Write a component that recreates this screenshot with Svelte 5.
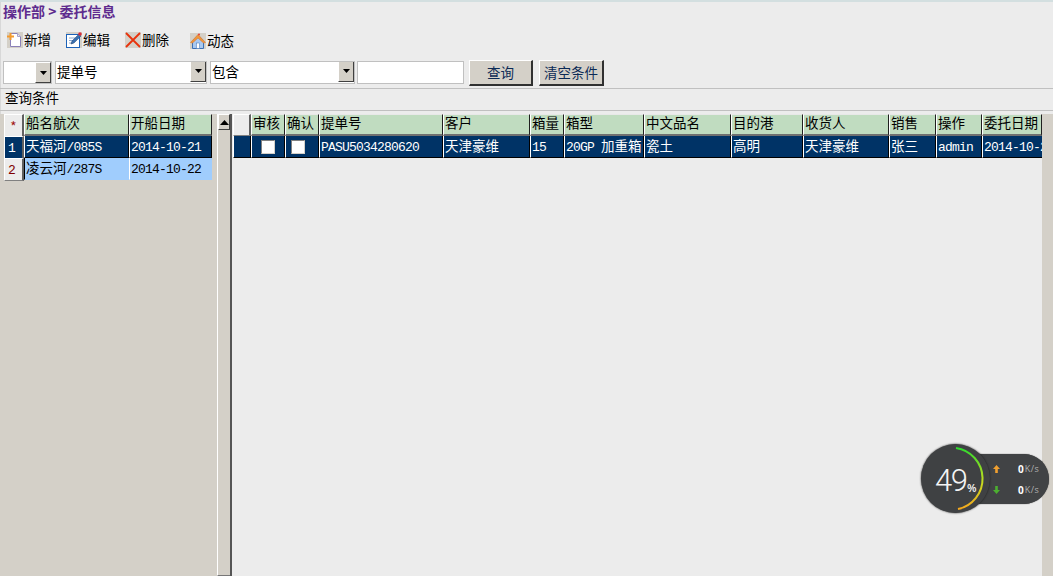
<script>
  const leftRows = [
    { no: "1", name: "天福河/085S", date: "2014-10-21", on: true },
    { no: "2", name: "凌云河/287S", date: "2014-10-22", on: false },
  ];
  const mainHeads = ["提单号", "客户", "箱量", "箱型", "中文品名", "目的港", "收货人", "销售", "操作", "委托日期"];
  const mainRow = ["PASU5034280620", "天津豪维", "15", "20GP 加重箱", "瓷土", "高明", "天津豪维", "张三", "admin", "2014-10-21"];

  // latin runs get their own size and tracking so they keep the 7px cell of the original font
  function runs(text) {
    return text.match(/[\x20-\x7e]+|[^\x20-\x7e]+/g).map((t) => ({ t, latin: /^[\x20-\x7e]/.test(t) }));
  }
</script>

{#snippet txt(text)}
  {#each runs(text) as r}
    {#if r.latin}<span class="latin">{r.t}</span>{:else}{r.t}{/if}
  {/each}
{/snippet}

{#snippet arrow()}
  <span class="drop"><svg width="7" height="4" viewBox="0 0 7 4"><path d="M0 0h7L3.500 4z" fill="#000" /></svg></span>
{/snippet}

<div class="page">
  <div class="title">操作部 &gt; 委托信息</div>

  <div class="toolbar">
    <div class="tool t-new">
      <svg width="16" height="16" viewBox="0 0 16 16">
        <rect width="16" height="16" fill="#d4d0c8" />
        <path d="M3.500 1.500h7l3 3v10h-10z" fill="#fff" stroke="#8a80b8" />
        <path d="M10.500 1.500v3h3" fill="#e8e8f4" stroke="#a8a4c8" />
        <path d="M3.500 1v7M0 4.500h7" stroke="#f29a2e" stroke-width="2" />
      </svg>
      <span>新增</span>
    </div>
    <div class="tool t-edit">
      <svg width="16" height="16" viewBox="0 0 16 16">
        <rect width="16" height="16" fill="#d4d0c8" />
        <rect x="0.500" y="2.500" width="13" height="13" fill="#fff" stroke="#1c62b8" />
        <path d="M3 6h6M3 8.500h5M3 11h4" stroke="#8aa8d0" />
        <path d="M5 12l1-3 7-7 2 2-7 7z" fill="#3a70b0" stroke="#20406c" stroke-width="0.500" />
        <circle cx="14" cy="2" r="1.800" fill="#d8303a" />
      </svg>
      <span>编辑</span>
    </div>
    <div class="tool t-del">
      <svg width="16" height="16" viewBox="0 0 16 16">
        <rect width="16" height="16" fill="#d4d0c8" />
        <path d="M1 1l14 14M15 1L1 15" stroke="#e8320c" stroke-width="1.800" />
      </svg>
      <span>删除</span>
    </div>
    <div class="tool t-home">
      <svg width="16" height="16" viewBox="0 0 16 16">
        <rect width="16" height="16" fill="#d4d0c8" />
        <path d="M2.500 8v7.500h11V8L8 3z" fill="#a8c8f0" stroke="#3c70b4" />
        <path d="M.500 9.500L8 1.500l7.500 8-2 .5L8 5 2.500 10z" fill="#f0963c" stroke="#d07028" stroke-width="0.500" />
        <rect x="6.500" y="10" width="3" height="5.500" fill="#fff" stroke="#3c70b4" stroke-width="0.500" />
        <circle cx="9" cy="1.500" r="1" fill="#e84030" />
      </svg>
      <span>动态</span>
    </div>
  </div>

  <div class="filters">
    <div class="select s-field">{@render arrow()}</div>
    <div class="select s-col"><span>提单号</span>{@render arrow()}</div>
    <div class="select s-op"><span>包含</span>{@render arrow()}</div>
    <div class="select s-val"></div>
    <div class="btn b-query">查询</div>
    <div class="btn b-clear">清空条件</div>
  </div>

  <div class="cond">查询条件</div>

  <div class="body">
    <div class="left">
      <div class="left-grid">
        <div class="lrow">
          <div class="corner">*</div>
          <div class="head">船名航次</div>
          <div class="head">开船日期</div>
        </div>
        {#each leftRows as r}
          <div class="lrow" class:on={r.on} class:off={!r.on}>
            <div class="rowno"><span class="latin">{r.no}</span></div>
            <div class="cell">{@render txt(r.name)}</div>
            <div class="cell">{@render txt(r.date)}</div>
          </div>
        {/each}
      </div>
      <div class="vscroll">
        <div class="up"><svg width="9" height="5" viewBox="0 0 9 5"><path d="M0 5h9L4.500 0z" fill="#000" /></svg></div>
      </div>
    </div>

    <div class="main">
      <div class="main-grid">
        <div class="mrow">
          <div class="blank"></div>
          <div class="head">审核</div>
          <div class="head">确认</div>
          {#each mainHeads as h}
            <div class="head">{h}</div>
          {/each}
        </div>
        <div class="mrow on">
          <div class="cell"></div>
          <div class="cell chk chk-a"><span class="box"></span></div>
          <div class="cell chk chk-b"><span class="box"></span></div>
          {#each mainRow as v}
            <div class="cell">{@render txt(v)}</div>
          {/each}
        </div>
      </div>
      <div class="rail"></div>
    </div>
  </div>

  <div class="speed">
    <div class="pill">
      <div class="rate"><svg width="7" height="8" viewBox="0 0 7 8"><path d="M3.500 0L7 4H4.800v4H2.200V4H0z" fill="#f0a030" /></svg><b>0</b><span>K/s</span></div>
      <div class="rate"><svg width="7" height="8" viewBox="0 0 7 8"><path d="M3.500 8L7 4H4.800V0H2.200v4H0z" fill="#4caf30" /></svg><b>0</b><span>K/s</span></div>
    </div>
    <div class="dial">
      <svg class="ring" width="70" height="70" viewBox="0 0 70 70">
        <defs>
          <linearGradient id="arc" x1="0" y1="0" x2="0" y2="1">
            <stop offset="0" stop-color="#2edb2e" />
            <stop offset="0.550" stop-color="#c4dc20" />
            <stop offset="1" stop-color="#f5a81e" />
          </linearGradient>
        </defs>
        <path d="M35 4A31 31 0 0 1 37 65" fill="none" stroke="url(#arc)" stroke-width="2" />
      </svg>
      <span class="pct">49</span><span class="unit">%</span>
    </div>
  </div>
</div>

<style>
  :global(body) {
    margin: 0;
    background: #ececec;
  }

  .page {
    position: relative;
    display: flex;
    flex-direction: column;
    width: 1053px;
    height: 576px;
    overflow: hidden;
    box-sizing: border-box;
    border-top: 2px solid #d3dfe0;
    background: #ececec;
    box-shadow: inset 2px 0 0 -1px #d8d8d8;
    font-family: "Noto Sans CJK SC", sans-serif;
    font-size: 13.5px;
    line-height: 16px;
    color: #000;
  }

  .latin {
    font-family: "Liberation Mono", monospace;
    font-size: 13px;
    letter-spacing: -0.8px;
  }

  .title {
    height: 20px;
    padding: 1px 0 0 3px;
    box-sizing: border-box;
    font-size: 14px;
    font-weight: 700;
    color: #5e2b8e;
    white-space: pre;
  }

  .toolbar {
    display: flex;
    height: 35px;
    padding: 10px 0 0 7px;
    box-sizing: border-box;
  }

  .tool {
    display: flex;
    align-items: center;
    gap: 1px;
    height: 16px;
  }

  .tool span {
    margin-bottom: 3px;
  }

  .t-new { width: 59px; }
  .t-edit { width: 59px; }
  .t-del { width: 65px; }
  .t-home { margin-top: 1px; }

  .filters {
    display: flex;
    align-items: center;
    height: 31px;
    padding-left: 3px;
    border-bottom: 1px solid #c0c0c0;
  }

  .select {
    display: flex;
    align-items: center;
    justify-content: space-between;
    box-sizing: border-box;
    height: 23px;
    margin-right: 3px;
    padding-left: 1px;
    background: #fff;
    border: 1px solid #c0c0c0;
    overflow: hidden;
  }

  .s-field { width: 49px; justify-content: flex-end; }
  .s-col { width: 152px; }
  .s-col span, .s-op span { margin-bottom: 3px; }
  .s-op { width: 145px; }
  .s-val { width: 107px; margin-left: -1px; margin-right: 5px; }

  .drop {
    display: flex;
    align-items: center;
    justify-content: center;
    width: 16px;
    height: 21px;
    box-sizing: border-box;
    background: #d4d0c8;
    border-top: 1px solid #fff;
    border-left: 1px solid #fff;
    border-right: 1px solid #404040;
    border-bottom: 1px solid #404040;
  }

  .btn {
    display: flex;
    align-items: center;
    justify-content: center;
    box-sizing: border-box;
    height: 26px;
    background: #d4d0c8;
    border-top: 1px solid #fff;
    border-left: 1px solid #fff;
    border-right: 2px solid #303030;
    border-bottom: 2px solid #303030;
    color: #0b2a55;
  }

  .b-query { width: 64px; margin-right: 6px; }
  .b-clear { width: 65px; }

  .cond {
    height: 22px;
    padding: 0 0 0 5px;
    box-sizing: border-box;
    line-height: 16px;
    border-bottom: 1px solid #c0c0c0;
  }

  .body {
    display: flex;
    flex: 1;
    min-height: 0;
    padding-top: 3px;
  }

  .left {
    display: flex;
    justify-content: space-between;
    width: 232px;
    box-sizing: border-box;
    background: #d4d0c8;
    border-right: 2px solid #555;
  }

  .left-grid {
    width: 208px;
    margin-left: 4px;
  }

  .lrow {
    display: grid;
    grid-template-columns: 20px 105px 83px;
    height: 22px;
  }

  .head {
    box-sizing: border-box;
    height: 22px;
    padding: 0 0 0 1px;
    background: #c0dcc0;
    border-top: 1px solid #e8e8e8;
    border-left: 1px solid #fff;
    border-right: 1px solid #202020;
    border-bottom: 2px solid #707070;
    line-height: 15px;
    white-space: nowrap;
  }

  .corner,
  .blank,
  .rowno {
    box-sizing: border-box;
    background: #ececec;
    border-right: 2px solid #606060;
    border-bottom: 1px solid #808080;
    border-left: 1px solid #fff;
    border-top: 1px solid #fff;
  }

  .corner {
    color: #a01010;
    text-align: center;
    line-height: 22px;
  }

  .rowno {
    padding-left: 3px;
    line-height: 19px;
    color: #800000;
  }

  .cell {
    box-sizing: border-box;
    height: 22px;
    padding-left: 1px;
    line-height: 18px;
    white-space: nowrap;
    border-left: 1px solid transparent;
    border-right: 1px solid #000;
    border-bottom: 1px solid #000;
  }

  /* the last column runs under the scrollbar rail, as in the original grid */
  .mrow .cell:last-child {
    overflow: hidden;
    border-right: 0;
  }

  .on .cell,
  .on .rowno {
    background: #003366;
    color: #fff;
  }

  .on .cell {
    border-left-color: #fff;
  }

  .off .cell {
    background: #a0cdfd;
    border-bottom-color: #a0cdfd;
    border-right-color: #a0cdfd;
    border-left-color: #000;
  }

  .off .cell + .cell {
    border-left-color: #fff;
  }

  .vscroll {
    box-sizing: border-box;
    width: 13px;
    border-left: 1px solid #fff;
    border-bottom: 1px solid #777;
  }

  .up {
    display: flex;
    align-items: center;
    justify-content: center;
    box-sizing: border-box;
    height: 16px;
    background: #d4d0c8;
    border-top: 1px solid #fff;
    border-left: 1px solid #fff;
    border-right: 1px solid #404040;
    border-bottom: 1px solid #404040;
  }

  .main {
    display: flex;
    flex: 1;
    min-width: 0;
    margin-left: 1px;
  }

  .main-grid {
    width: 809px;
  }

  .mrow {
    display: grid;
    grid-template-columns: 18px 34px 34px 124px 87px 34px 80px 87px 72px 86px 47px 46px 60px;
    height: 22px;
  }

  .chk {
    display: flex;
    align-items: center;
    padding: 0;
  }

  .chk-a { padding-left: 9px; }
  .chk-b { padding-left: 5px; }

  .box {
    width: 12px;
    height: 12px;
    background: #fff;
    border-top: 1px solid #808080;
    border-left: 1px solid #808080;
    border-right: 1px solid #d4d0c8;
    border-bottom: 1px solid #d4d0c8;
  }

  .rail {
    flex: 1;
    background: #d4d0c8;
  }

  .speed {
    position: absolute;
    left: 921px;
    top: 442px;
    width: 128px;
    height: 70px;
  }

  .pill {
    position: absolute;
    left: 30px;
    top: 10px;
    display: flex;
    flex-direction: column;
    justify-content: center;
    gap: 5px;
    box-sizing: border-box;
    width: 98px;
    height: 50px;
    padding-left: 42px;
    border-radius: 25px;
    background: #414345;
    box-shadow: 0 0 1px #222;
  }

  .rate {
    display: flex;
    align-items: center;
    height: 16px;
    font-family: "Open Sans", sans-serif;
    font-size: 9px;
    color: #b0b0b0;
  }

  .rate b {
    margin-left: 18px;
    font-weight: 700;
    font-size: 10px;
    color: #fff;
  }

  .rate span {
    margin-left: 1px;
    letter-spacing: 0.5px;
  }

  .dial {
    position: absolute;
    left: 0;
    top: 0;
    box-sizing: border-box;
    width: 69px;
    height: 69px;
    border-radius: 50%;
    background: #3f4143;
    box-shadow: 0 0 2px #1c1c1c;
    color: #f4f4f4;
    font-family: "Roboto", sans-serif;
    text-align: center;
  }

  .ring {
    position: absolute;
    left: 0;
    top: 0;
  }

  .pct {
    position: absolute;
    left: 14px;
    top: 19px;
    font-size: 31px;
    line-height: 36px;
    font-weight: 300;
    letter-spacing: -1.500px;
  }

  .unit {
    position: absolute;
    left: 46px;
    top: 37px;
    font-family: "Open Sans", sans-serif;
    font-size: 11px;
    line-height: 14px;
    font-weight: 600;
  }
</style>
